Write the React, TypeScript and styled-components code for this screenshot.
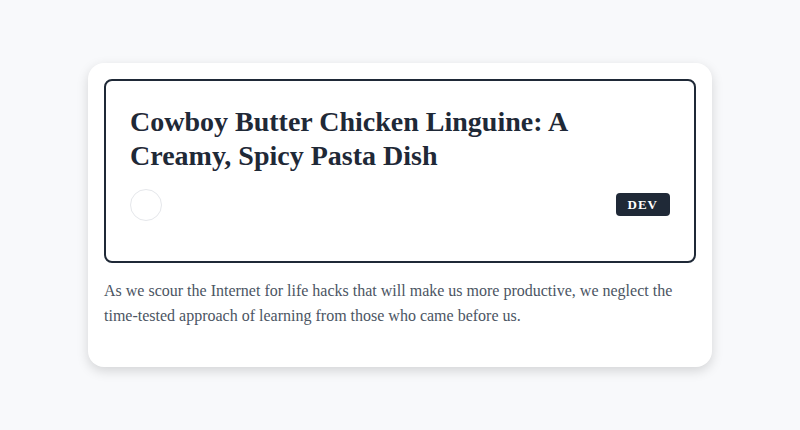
import React from "react";
import styled, { createGlobalStyle } from "styled-components";

const GlobalStyle = createGlobalStyle`
  * { box-sizing: border-box; }
  html, body { margin: 0; padding: 0; }
  body {
    background: #f8f9fb;
    font-family: "Liberation Serif", "Times New Roman", serif;
  }
`;

const Page = styled.div`
  min-height: 100vh;
  display: flex;
  align-items: center;
  justify-content: center;
`;

const Card = styled.article`
  width: 624px;
  background: #fff;
  border-radius: 16px;
  padding: 16px 16px 38px;
  box-shadow: 0 4px 12px rgba(0, 0, 0, 0.15);
`;

const Header = styled.div`
  border: 2px solid #1f2937;
  border-radius: 8px;
  padding: 24px 24px 40px;
`;

const Title = styled.h2`
  margin: 0;
  font-size: 28px;
  line-height: 1.2;
  font-weight: 700;
  color: #1f2937;
`;

const Meta = styled.div`
  margin-top: 16px;
  display: flex;
  align-items: center;
  justify-content: space-between;
`;

const Avatar = styled.div`
  width: 32px;
  height: 32px;
  border-radius: 50%;
  border: 1px solid #e5e7eb;
  background: #fff;
`;

const Tag = styled.span`
  background: #1f2937;
  color: #fff;
  font-size: 13px;
  font-weight: 700;
  letter-spacing: 1px;
  padding: 4px 12px;
  border-radius: 4px;
  line-height: 15px;
`;

const Excerpt = styled.p`
  margin: 15px 0 0;
  font-size: 16px;
  line-height: 1.6;
  color: #4b5563;
`;

export default function App() {
  return (
    <>
      <GlobalStyle />
      <Page>
        <Card>
          <Header>
            <Title>Cowboy Butter Chicken Linguine: A Creamy, Spicy Pasta Dish</Title>
            <Meta>
              <Avatar />
              <Tag>DEV</Tag>
            </Meta>
          </Header>
          <Excerpt>
            As we scour the Internet for life hacks that will make us more productive, we neglect the
            time-tested approach of learning from those who came before us.
          </Excerpt>
        </Card>
      </Page>
    </>
  );
}
